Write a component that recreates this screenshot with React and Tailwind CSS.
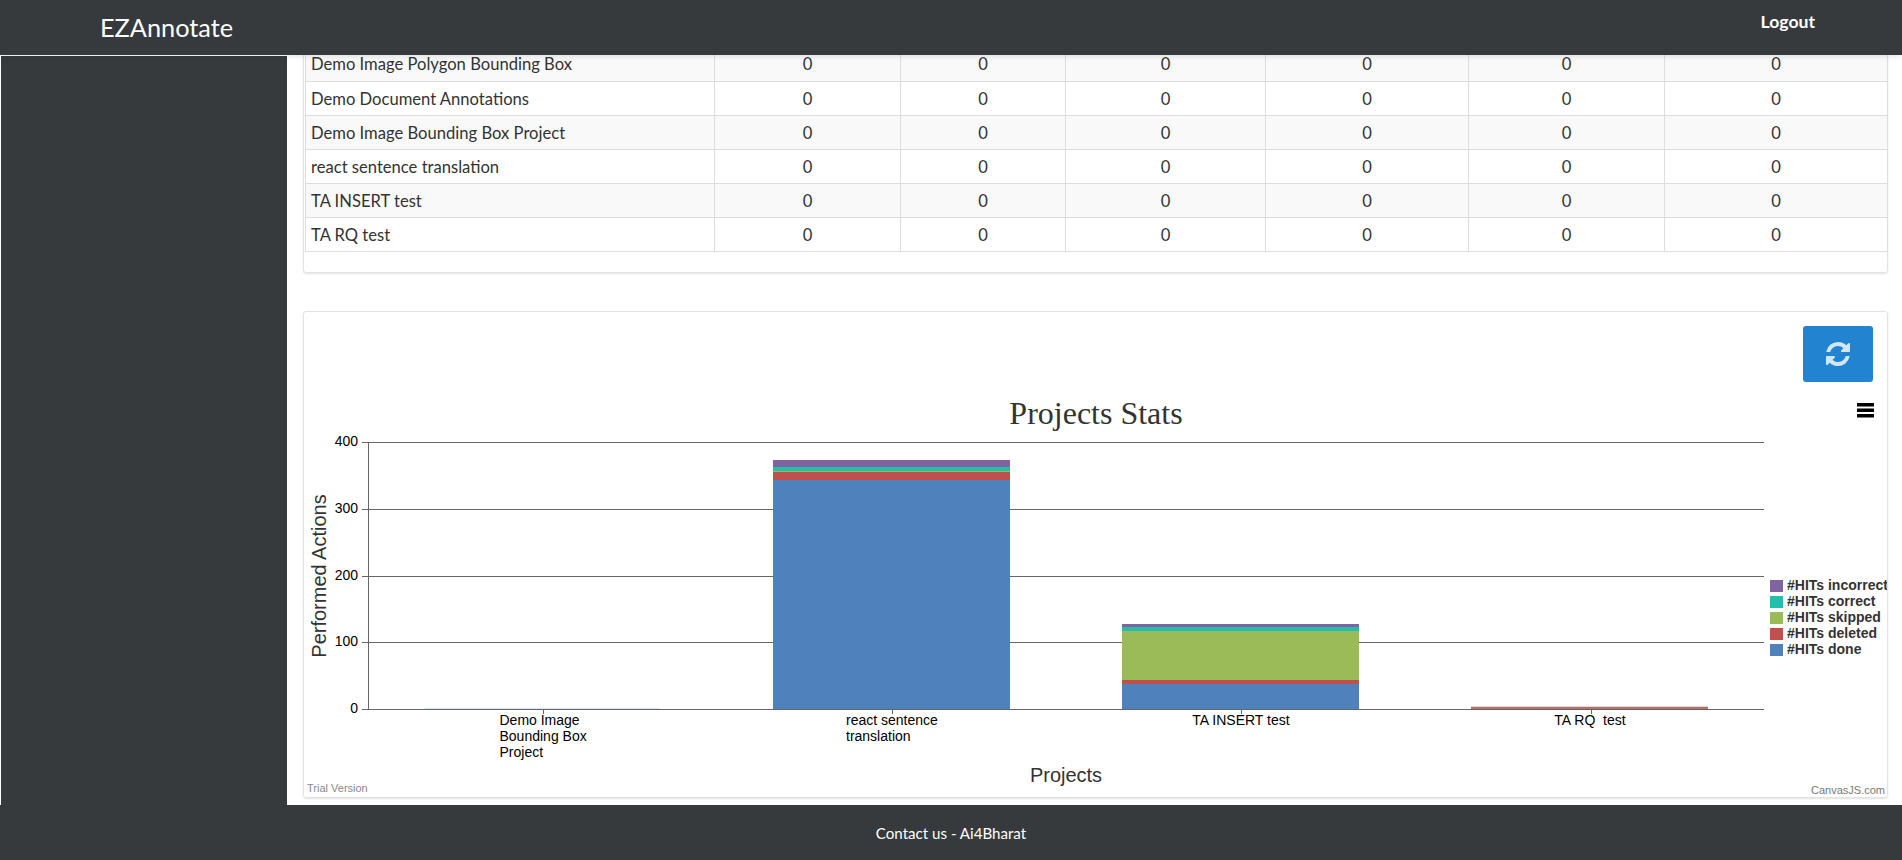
import React from 'react';

const ROWS = [
  'Demo Image Polygon Bounding Box',
  'Demo Document Annotations',
  'Demo Image Bounding Box Project',
  'react sentence translation',
  'TA INSERT test',
  'TA RQ test',
];

const COL_WIDTHS = [186, 165, 200, 203, 196, 223];

const GRID = [442, 509, 576, 642];

const TICKS = [
  { label: '400', y: 442 },
  { label: '300', y: 509 },
  { label: '200', y: 576 },
  { label: '100', y: 642 },
  { label: '0', y: 709 },
];

const COLORS = {
  done: '#4F81BC',
  deleted: '#C0504E',
  skipped: '#9BBB58',
  correct: '#23BFAA',
  incorrect: '#8064A1',
};

const SEGMENTS = [
  { x: 424, w: 236, y: 708, h: 1, fill: '#DCE6F1' },
  { x: 773, w: 237, y: 480, h: 229, fill: COLORS.done },
  { x: 773, w: 237, y: 472, h: 8, fill: COLORS.deleted },
  { x: 773, w: 237, y: 471, h: 1, fill: COLORS.skipped },
  { x: 773, w: 237, y: 467, h: 4, fill: COLORS.correct },
  { x: 773, w: 237, y: 460, h: 7, fill: COLORS.incorrect },
  { x: 1122, w: 237, y: 684, h: 25, fill: COLORS.done },
  { x: 1122, w: 237, y: 680, h: 4, fill: COLORS.deleted },
  { x: 1122, w: 237, y: 631, h: 49, fill: COLORS.skipped },
  { x: 1122, w: 237, y: 627, h: 4, fill: COLORS.correct },
  { x: 1122, w: 237, y: 624, h: 3, fill: COLORS.incorrect },
  { x: 1471, w: 237, y: 706, h: 1, fill: '#D9D9E3' },
  { x: 1471, w: 237, y: 707, h: 2, fill: '#BC6E64' },
];

const LEGEND = [
  { label: '#HITs incorrect', color: COLORS.incorrect, y: 580 },
  { label: '#HITs correct', color: COLORS.correct, y: 596 },
  { label: '#HITs skipped', color: COLORS.skipped, y: 612 },
  { label: '#HITs deleted', color: COLORS.deleted, y: 628 },
  { label: '#HITs done', color: COLORS.done, y: 644 },
];

const X_LABELS = [
  { lines: ['Demo Image', 'Bounding Box', 'Project'], x: 499.5, anchor: 'start', tick: 543 },
  { lines: ['react sentence', 'translation'], x: 846, anchor: 'start', tick: 892 },
  { lines: ['TA INSERT test'], x: 1241, anchor: 'middle', tick: 1241 },
  { lines: ['TA RQ  test'], x: 1590, anchor: 'middle', tick: 1591 },
];

const RefreshIcon = () => (
  <svg width="28" height="28" viewBox="0 0 1792 1792" fill="currentColor" className="ml-[3px]">
    <path d="M1511 1056q0 5-1 7-64 268-268 434.5t-478 166.5q-146 0-282.5-55t-243.5-157l-129 129q-19 19-45 19t-45-19-19-45v-448q0-26 19-45t45-19h448q26 0 45 19t19 45-19 45l-137 137q71 66 161 102t187 36q134 0 250-65t186-179q11-17 53-117 8-23 30-23h192q13 0 22.5 9.5t9.5 22.5zm25-800v448q0 26-19 45t-45 19h-448q-26 0-45-19t-19-45 19-45l138-138q-148-137-349-137-134 0-250 65t-186 179q-11 17-53 117-8 23-30 23h-199q-13 0-22.5-9.5t-9.5-22.5v-7q65-268 270-434.5t480-166.5q146 0 284 55.5t245 156.5l130-129q19-19 45-19t45 19 19 45z" />
  </svg>
);

const StatsChart = () => (
  <svg
    width="1584"
    height="414"
    viewBox="304 382 1584 414"
    className="block"
    fontFamily="'Liberation Sans', Arial, sans-serif"
  >
    <text x="1096" y="424" textAnchor="middle" fontSize="32" fontFamily="'Liberation Serif', 'Times New Roman', serif" fill="#333">
      Projects Stats
    </text>
    <g fill="#000" transform="translate(1857 403)">
      <rect width="17" height="3.5" />
      <rect y="5.5" width="17" height="3.5" />
      <rect y="11" width="17" height="3.5" />
    </g>

    {GRID.map((y) => (
      <line key={y} x1="362" x2="1764" y1={y + 0.5} y2={y + 0.5} stroke="#666" strokeWidth="1" />
    ))}
    {SEGMENTS.map((s, i) => (
      <rect key={i} x={s.x} y={s.y} width={s.w} height={s.h} fill={s.fill} />
    ))}
    <line x1="362" x2="1764" y1="709.5" y2="709.5" stroke="#666" />
    <line x1="368.5" x2="368.5" y1="442" y2="709" stroke="#666" />

    {TICKS.map((t) => (
      <text key={t.label} x="358" y={t.y + 4} textAnchor="end" fontSize="14" fill="#000">
        {t.label}
      </text>
    ))}

    {X_LABELS.map((l) => (
      <g key={l.tick}>
        <line x1={l.tick + 0.5} x2={l.tick + 0.5} y1="709" y2="714" stroke="#666" />
        {l.lines.map((line, i) => (
          <text key={line} x={l.x} y={725 + i * 16} textAnchor={l.anchor} fontSize="14" fill="#000" style={{ whiteSpace: 'pre' }}>
            {line}
          </text>
        ))}
      </g>
    ))}

    <text transform="translate(326 576) rotate(-90)" textAnchor="middle" fontSize="20" fill="#333">
      Performed Actions
    </text>
    <text x="1066" y="782" textAnchor="middle" fontSize="20" fill="#333">
      Projects
    </text>

    {LEGEND.map((l) => (
      <g key={l.label}>
        <rect x="1770" y={l.y} width="13" height="12" fill={l.color} />
        <text x="1787" y={l.y + 10} fontSize="14" fontWeight="bold" fill="#333">
          {l.label}
        </text>
      </g>
    ))}

    <text x="307" y="792" fontSize="11" fill="#888">Trial Version</text>
    <text x="1885" y="794" textAnchor="end" fontSize="11" fill="#777">CanvasJS.com</text>
  </svg>
);

const App = () => {
  return (
    <div className="h-[860px] flex flex-col overflow-hidden bg-white font-['Lato',sans-serif] text-[#333]">
      <nav className="relative z-10 h-[55px] shrink-0 flex items-start justify-between bg-[#373a3c] text-white shadow-[0_1px_6px_rgba(0,0,0,0.12)]">
        <a className="ml-[100px] mt-[10px] text-[25.3px] leading-[34px] font-normal">EZAnnotate</a>
        <a className="mr-[87px] mt-[11px] text-[17.6px] leading-[22px] font-bold">Logout</a>
      </nav>

      <div className="flex-1 flex min-h-0">
        <aside className="w-[287px] shrink-0 mt-px border-l border-white bg-[#373a3c]" />
        <main className="flex-1 min-w-0 overflow-hidden pl-4 pr-[14px]">
          <section className="-mt-[9px] h-[227px] border border-[#e3e3e3] rounded-[3px] pl-px shadow-[0_1px_2px_rgba(0,0,0,0.12)]">
            <table className="table-fixed w-[1582px] border-collapse text-[16.6px]">
              <colgroup>
                <col className="w-[409px]" />
                {COL_WIDTHS.map((w, i) => (
                  <col key={i} style={{ width: w }} />
                ))}
              </colgroup>
              <tbody>
                {ROWS.map((name, idx) => (
                  <tr key={name} className={`h-[34px] ${idx % 2 === 0 ? 'bg-[#f9f9f9]' : 'bg-white'}`}>
                    <td className="border border-[#ddd] border-t-0 px-[5px] pt-[2px] pb-0">{name}</td>
                    {COL_WIDTHS.map((w, i) => (
                      <td key={i} className="border border-[#ddd] border-t-0 text-center pt-[2px] pb-0">0</td>
                    ))}
                  </tr>
                ))}
              </tbody>
            </table>
          </section>

          <section className="mt-[38px] h-[487px] border border-[#e3e3e3] rounded-[3px] shadow-[0_1px_2px_rgba(0,0,0,0.12)] overflow-hidden">
            <div className="flex justify-end pt-[14px] pr-[14px]">
              <button className="w-[70px] h-14 flex items-center justify-center rounded-[3px] bg-[#2283d0] text-[#d3e6f6]">
                <RefreshIcon />
              </button>
            </div>
            <StatsChart />
          </section>
        </main>
      </div>

      <footer className="h-[55px] shrink-0 flex items-center justify-center pt-0.5 bg-[#373a3c] text-white text-[15.1px]">
        Contact us - Ai4Bharat
      </footer>
    </div>
  );
};

export default App;
